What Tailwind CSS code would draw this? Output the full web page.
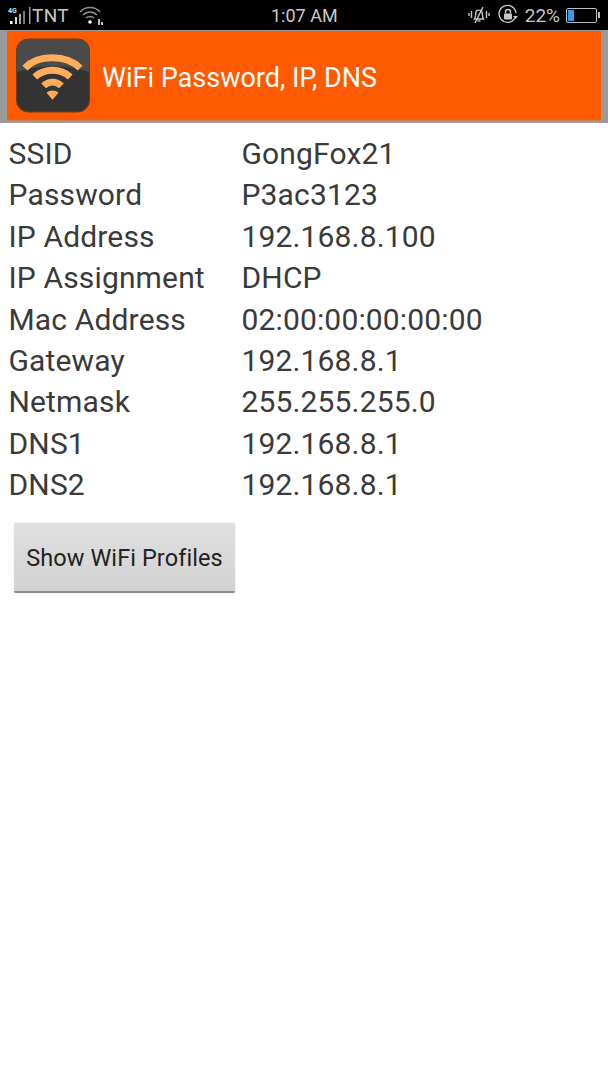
<!DOCTYPE html>
<html lang="en">
<head>
    <meta charset="UTF-8">
    <title>WiFi Password, IP, DNS</title>
    <script src="https://cdn.jsdelivr.net/npm/@tailwindcss/browser@4"></script>
</head>
<body class="bg-white font-['Roboto',sans-serif] w-[608px] h-[1080px] overflow-hidden">
    <!-- status bar -->
    <div class="h-[30px] bg-black text-[#c9c9c9] flex items-center justify-between pl-[8px] pr-[8px]">
        <div class="flex items-center w-[240px]">
            <svg width="24" height="20" viewBox="0 0 24 20" class="shrink-0">
                <text x="0" y="8" font-size="7" font-family="Roboto" font-weight="700" fill="#ddd">4G</text>
                <rect x="2" y="16" width="2.5" height="3" fill="#fff"/>
                <rect x="7" y="12" width="2" height="7" fill="#ddd"/>
                <rect x="11" y="9" width="2" height="10" fill="#aaa"/>
                <rect x="15" y="6" width="2" height="13" fill="#777"/>
                <rect x="21" y="2" width="1.5" height="17" fill="#999"/>
            </svg>
            <span class="text-[19px] leading-none tracking-[0.3px]">TNT</span>
            <svg width="26" height="20" viewBox="0 0 26 20" class="ml-[9px] shrink-0" fill="none" stroke="#8f8f8f">
                <path d="M2 7 C7 1 17 1 22 7" stroke-width="1.5"/>
                <path d="M5 10 C9 6 15 6 19 10" stroke-width="1.5"/>
                <path d="M8 13 C10 11 14 11 16 13" stroke-width="1.5"/>
                <circle cx="12" cy="17" r="1.8" fill="#fff" stroke="none"/>
                <path d="M20 14h2v6h-2zM23 17h2v3h-2z" fill="#bdbdbd" stroke="none"/>
            </svg>
        </div>
        <span class="text-[18px] leading-none absolute left-[271px] top-[7px]">1:07 AM</span>
        <div class="flex items-center">
            <svg width="22" height="20" viewBox="0 0 22 20" fill="none" stroke="#c9c9c9" stroke-width="1.4" class="shrink-0">
                <path d="M6.5 14 C8 12 7.5 9 8 7 C8.5 4.5 13.5 4.5 14 7 C14.5 9 14 12 15.5 14 Z"/>
                <path d="M9.5 16 h3"/>
                <path d="M15 2 L7 18"/>
                <path d="M3.5 6v7M1 8v3M18.5 6v7M21 8v3"/>
            </svg>
            <svg width="22" height="22" viewBox="0 0 22 22" fill="none" stroke="#c9c9c9" stroke-width="1.4" class="ml-[7px] shrink-0">
                <path d="M18 14 A8.5 8.5 0 1 1 19 9"/>
                <path d="M16 12h5l-2.5 3z" fill="#c9c9c9" stroke="none"/>
                <rect x="7" y="9.5" width="8" height="6" rx="1" fill="#c9c9c9" stroke="none"/>
                <path d="M8.5 9.5V8a2.5 2.5 0 0 1 5 0v1.5"/>
            </svg>
            <span class="text-[19px] leading-none ml-[6px]">22%</span>
            <div class="ml-[6px] flex items-center">
                <div class="w-[31px] h-[15px] border border-[#bdbdbd] rounded-[2px] p-[1px] flex">
                    <div class="w-[6px] bg-[#2f9bf0]"></div>
                </div>
                <div class="w-[2px] h-[6px] bg-[#bdbdbd] ml-[1px]"></div>
            </div>
        </div>
    </div>
    <!-- app title -->
    <div class="h-[93px] bg-[#9a9a9a] px-[7px] pt-[1px] pb-[2px]">
        <div class="h-[90px] bg-[#ff5a00] flex items-center pl-[9px] border-b border-[#c8835a]">
            <svg width="74" height="75" viewBox="0 0 75 75" class="shrink-0">
                <rect x="0.5" y="0.5" width="74" height="74" rx="12" fill="#333" stroke="#6b3a1c"/>
                <path d="M0.5 12.5a12 12 0 0 1 12-12h50a12 12 0 0 1 12 12v22c-20-8-54-8-74 0z" fill="#4a4a4a"/>
                <g fill="none" stroke="#ffad5c">
                    <path d="M9 30 C22 16 51 16 65 30" stroke-width="7"/>
                    <path d="M19 39 C29 30 45 30 55 39" stroke-width="7"/>
                    <path d="M28 48 C33 43 41 43 46 48" stroke-width="7"/>
                </g>
                <path d="M37 62 L31 55 C34 52 40 52 43 55 Z" fill="#ffad5c"/>
            </svg>
            <span class="ml-[12px] text-white text-[27px] leading-none mt-[6px]">WiFi Password, IP, DNS</span>
        </div>
    </div>
    <!-- details -->
    <div class="pl-[8.5px] pt-[10px] text-[#3a3a3a] text-[30px] leading-[41.4px] grid grid-cols-[233px_1fr] tracking-[0.15px]">
        <span>SSID</span><span>GongFox21</span>
        <span>Password</span><span>P3ac3123</span>
        <span>IP Address</span><span>192.168.8.100</span>
        <span>IP Assignment</span><span>DHCP</span>
        <span>Mac Address</span><span>02:00:00:00:00:00</span>
        <span>Gateway</span><span>192.168.8.1</span>
        <span>Netmask</span><span>255.255.255.0</span>
        <span>DNS1</span><span>192.168.8.1</span>
        <span>DNS2</span><span>192.168.8.1</span>
    </div>
    <button class="block ml-[14px] mt-[17px] w-[221px] h-[70px] pt-[5px] rounded-[2px] bg-gradient-to-b from-[#e0e0e0] to-[#d2d2d2] border-b-2 border-[#8e8e8e] shadow-[0_0_1px_#aaa] text-[#222] text-[23.5px] leading-none tracking-[0.08px]">Show WiFi Profiles</button>
</body>
</html>
